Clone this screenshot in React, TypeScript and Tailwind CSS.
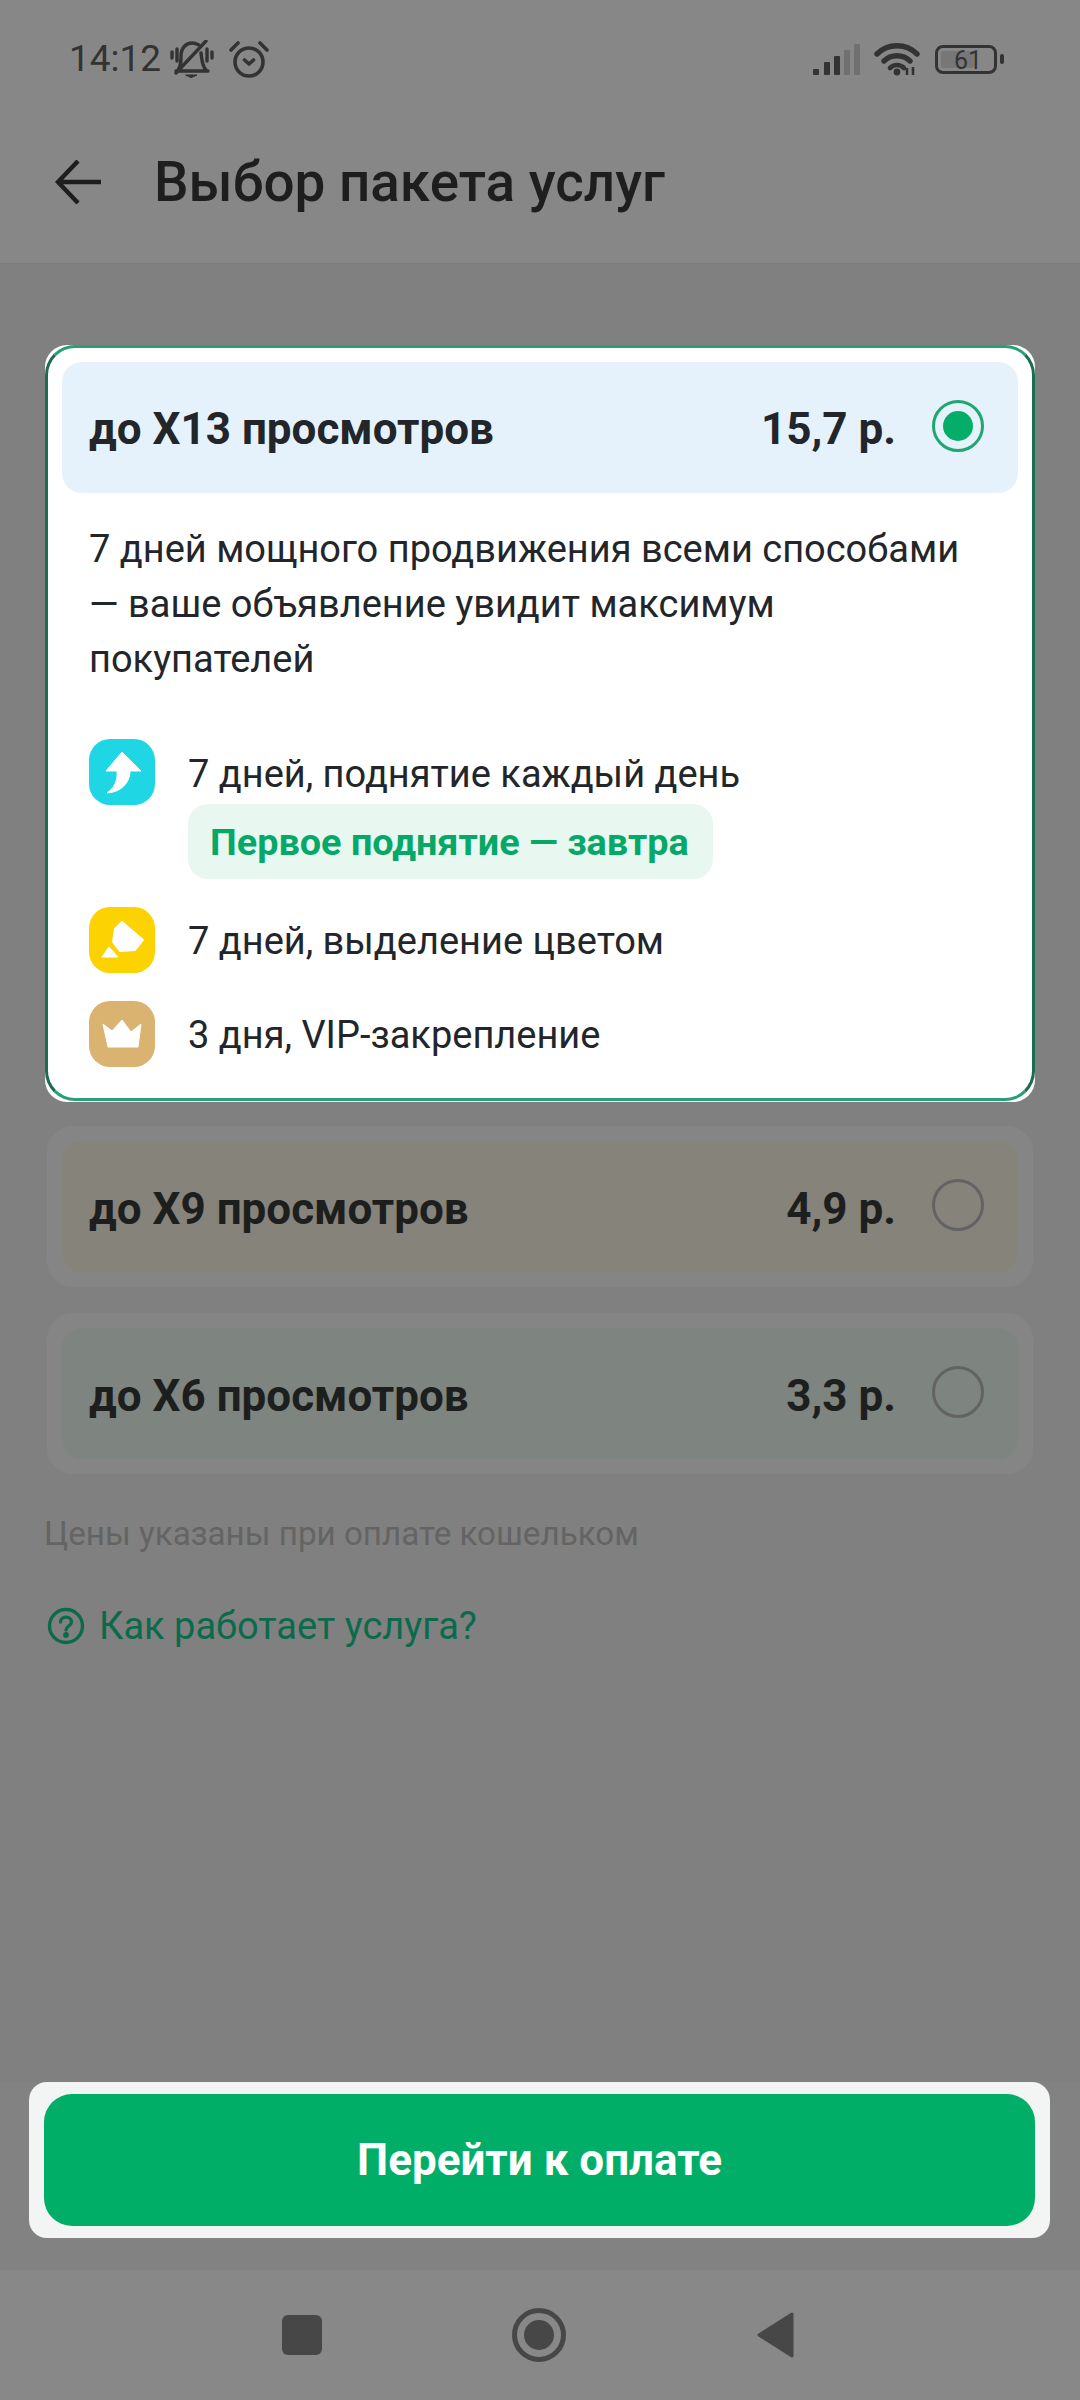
import React from 'react';

const ArrowTile = () => (
  <svg width="66" height="66" viewBox="0 0 66 66" className="shrink-0">
    <rect width="66" height="66" rx="21" fill="#1fd7e4" />
    <path d="M33 13 L52 32 H41 C41 43 33 53 18 54 C25 49 29 42 28 32 H17 Z" fill="#ffffff" stroke="#ffffff" strokeWidth="1" strokeLinejoin="round" />
  </svg>
);

const MarkerTile = () => (
  <svg width="66" height="66" viewBox="0 0 66 66" className="shrink-0">
    <rect width="66" height="66" rx="21" fill="#fcd200" />
    <path d="M33 15 L54 33 L46 43 L31 44 L24 35 L26 22 Z" fill="#ffffff" stroke="#ffffff" strokeWidth="2" strokeLinejoin="round" />
    <path d="M13 50 L20 40 L29 50 Z" fill="#ffffff" stroke="#ffffff" strokeWidth="1" strokeLinejoin="round" />
  </svg>
);

const CrownTile = () => (
  <svg width="66" height="66" viewBox="0 0 66 66" className="shrink-0">
    <rect width="66" height="66" rx="21" fill="#d9b36f" />
    <path d="M14 23 L23 30 L33 19 L42 31 L52 23 L49 46 H19 Z" fill="#ffffff" stroke="#ffffff" strokeWidth="1" strokeLinejoin="round" />
  </svg>
);

const BellOff = () => (
  <svg width="44" height="38" viewBox="0 0 44 38" fill="none" stroke="#333333" strokeWidth="3.4" strokeLinecap="round">
    <path d="M2 12 V18 M7 9 V21 M37 9 V21 M42 12 V18" />
    <path d="M8 30 C11 26 11 22 11 16 C11 8 16 3 22 3 C25 3 27 4 29 5" />
    <path d="M31 13 C32 20 32 26 36 30" />
    <path d="M6 31 H38" />
    <path d="M6 33 L36 1" />
    <path d="M16 35 H27 L21.5 37.5 Z" fill="#333333" strokeWidth="1" />
  </svg>
);

const AlarmIcon = () => (
  <svg width="40" height="37" viewBox="0 0 40 37" fill="none" stroke="#333333" strokeWidth="3.6" strokeLinecap="round" strokeLinejoin="round">
    <circle cx="20" cy="21" r="14" />
    <path d="M2 9 L9 2 M31 2 L38 9" />
    <path d="M15.5 19 L20 23 L24.5 19" />
  </svg>
);

const SignalIcon = () => (
  <svg width="48" height="31" viewBox="0 0 48 31">
    <rect x="0" y="25" width="6" height="6" rx="1" fill="#333333" />
    <rect x="11" y="18" width="6" height="13" rx="1" fill="#333333" />
    <rect x="21" y="12" width="6" height="19" rx="1" fill="#333333" />
    <rect x="31" y="6" width="6" height="25" rx="1" fill="#707070" />
    <rect x="41" y="0" width="6" height="31" rx="1" fill="#707070" />
  </svg>
);

const WifiIcon = () => (
  <svg width="46" height="33" viewBox="0 0 46 33" fill="none" stroke="#333333" strokeWidth="5.4" strokeLinecap="round">
    <path d="M3 11 C14 0 32 0 43 11" />
    <path d="M10 18 C17 11 29 11 36 18" />
    <path d="M16 25 C20 21 26 21 30 25" strokeWidth="4.6" />
    <circle cx="23" cy="29" r="3.4" fill="#333333" stroke="none" />
    <path d="M33 25 V32 M39 24 V32" strokeWidth="2.6" strokeLinecap="butt" />
  </svg>
);

const Battery = () => (
  <div className="flex items-center gap-[3px]">
    <div className="flex h-[29px] w-[62px] items-center rounded-[8px] border-[3px] border-[#333333] p-[3px]">
      <div className="relative h-full w-[33px] rounded-[2px] bg-[#777777]">
        <span className="absolute left-[13px] top-[-5px] text-[25px] leading-[29px] text-[#333333]">61</span>
      </div>
    </div>
    <div className="h-[10px] w-[4px] rounded-[2px] bg-[#333333]" />
  </div>
);

const Radio = () => (
  <div className="h-[52px] w-[52px] shrink-0 rounded-full border-[3px] border-[#636363]" />
);

interface PackageRowProps {
  title: string;
  price: string;
  rowClass: string;
}

const PackageRow: React.FC<PackageRowProps> = ({ title, price, rowClass }) => (
  <div className="rounded-[26px] bg-[#858585] p-[15px]">
    <div className={`flex h-[131px] items-center rounded-[20px] pl-[27px] pr-[34px] ${rowClass}`}>
      <span className="flex-1 pt-[4px] text-[44px] font-bold text-[#1d1f1e]">{title}</span>
      <span className="mr-[36px] pt-[4px] text-[44px] font-bold text-[#1d1f1e]">{price}</span>
      <div className="-mt-[3px]">
        <Radio />
      </div>
    </div>
  </div>
);

export default function App() {
  return (
    <div className="flex h-[2400px] w-[1080px] flex-col overflow-hidden bg-[#808080] font-['Roboto',sans-serif]">
      {/* status bar + title */}
      <div className="h-[264px] shrink-0 border-b border-[#7d7d7d] bg-[#878787]">
        <div className="flex h-[118px] items-center pl-[69px] pr-[76px]">
          <span className="text-[37px] text-[#333333]">14:12</span>
          <div className="ml-[9px]">
            <BellOff />
          </div>
          <div className="ml-[15px]">
            <AlarmIcon />
          </div>
          <div className="flex-1" />
          <SignalIcon />
          <div className="ml-[13px]">
            <WifiIcon />
          </div>
          <div className="ml-[15px]">
            <Battery />
          </div>
        </div>
        <div className="flex h-[128px] items-center pl-[55px]">
          <svg width="46" height="44" viewBox="0 0 46 44" fill="none" stroke="#1e1e1e" strokeWidth="4.4">
            <path d="M46 22 H3 M23 1 L3 22 L23 43" />
          </svg>
          <h1 className="ml-[53px] text-[54.8px] font-medium text-[#1e1e1e]">Выбор пакета услуг</h1>
        </div>
      </div>

      {/* packages */}
      <div className="flex flex-1 flex-col px-[45px] pt-[81px]">
        <div className="h-[757px] rounded-[22px] bg-white">
          <div className="h-[756px] rounded-[30px] border-[3px] border-x-[#1d6b52] border-y-[#27a077] bg-white px-[14px] pt-[14px]">
            <div className="flex h-[131px] items-center rounded-[20px] bg-[#e6f2fb] pl-[27px] pr-[34px]">
              <span className="flex-1 pt-[3px] text-[44px] font-bold text-[#22262a]">до X13 просмотров</span>
              <span className="mr-[36px] pt-[3px] text-[44px] font-bold text-[#22262a]">15,7 р.</span>
              <div className="-mt-[3px] flex h-[52px] w-[52px] items-center justify-center rounded-full border-[3px] border-[#1fa772]">
                <div className="h-[30px] w-[30px] rounded-full bg-[#05ae68]" />
              </div>
            </div>
            <p className="mt-[29px] pl-[27px] text-[38px] leading-[55px] text-[#22262a]">
              7 дней мощного продвижения всеми способами
              <br />
              — ваше объявление увидит максимум
              <br />
              покупателей
            </p>
            <div className="mt-[52px] flex pl-[27px]">
              <ArrowTile />
              <div className="ml-[33px] pt-[8px]">
                <div className="text-[38px] leading-[55px] text-[#22262a]">7 дней, поднятие каждый день</div>
              </div>
            </div>
            <div className="-mt-[1px] ml-[126px] flex h-[75px] w-[525px] items-center rounded-[20px] bg-[#e9f7f1] pl-[22px]">
              <span className="pt-[2px] text-[37.8px] font-bold text-[#05a866]">Первое поднятие — завтра</span>
            </div>
            <div className="mt-[28px] flex items-center pl-[27px]">
              <MarkerTile />
              <span className="ml-[33px] pt-[2px] text-[38px] text-[#22262a]">7 дней, выделение цветом</span>
            </div>
            <div className="mt-[28px] flex items-center pl-[27px]">
              <CrownTile />
              <span className="ml-[33px] pt-[2px] text-[38px] text-[#22262a]">3 дня, VIP-закрепление</span>
            </div>
          </div>
        </div>

        <div className="mx-[2px] mt-[24px] flex flex-col gap-[26px]">
          <PackageRow title="до X9 просмотров" price="4,9 р." rowClass="bg-[#86837a]" />
          <PackageRow title="до X6 просмотров" price="3,3 р." rowClass="bg-[#7e8480]" />
        </div>

        <p className="-ml-[1px] mt-[35px] text-[33.2px] text-[#646464]">Цены указаны при оплате кошельком</p>
        <div className="mt-[39px] flex items-center pl-[2px]">
          <svg width="38" height="38" viewBox="0 0 38 38" fill="none" stroke="#0c6a4c" strokeWidth="3.4" strokeLinecap="round">
            <circle cx="19" cy="19" r="16.5" />
            <path d="M13.5 15 C13.5 8.5 24.5 8.5 24.5 15 C24.5 19 19 19 19 23" />
            <circle cx="19" cy="28" r="1.2" fill="#0c6a4c" />
          </svg>
          <span className="ml-[14px] text-[38px] text-[#0c6a4c]">Как работает услуга?</span>
        </div>
        <div className="flex-1" />
      </div>

      {/* pay button */}
      <div className="shrink-0 bg-[#828282] pb-[32px] pl-[29px] pr-[30px]">
        <div className="rounded-[18px] bg-[#f3f4f4] px-[15px] py-[12px]">
          <div className="flex h-[132px] items-center justify-center rounded-[28px] bg-[#01ae67]">
            <span className="text-[44px] font-bold text-white">Перейти к оплате</span>
          </div>
        </div>
      </div>

      {/* system nav */}
      <div className="flex h-[130px] shrink-0 items-center justify-center bg-[#888888] pr-[2px]">
        <div className="flex w-[237px] justify-center">
          <div className="h-[40px] w-[40px] rounded-[6px] bg-[#474747]" />
        </div>
        <div className="flex w-[237px] justify-center">
          <div className="flex h-[54px] w-[54px] items-center justify-center rounded-full border-[5px] border-[#474747]">
            <div className="h-[30px] w-[30px] rounded-full bg-[#474747]" />
          </div>
        </div>
        <div className="flex w-[237px] justify-center">
          <svg width="38" height="46" viewBox="0 0 38 46">
            <path d="M35 2 L2 23 L35 44 Z" fill="#474747" stroke="#474747" strokeWidth="3" strokeLinejoin="round" />
          </svg>
        </div>
      </div>
    </div>
  );
}
